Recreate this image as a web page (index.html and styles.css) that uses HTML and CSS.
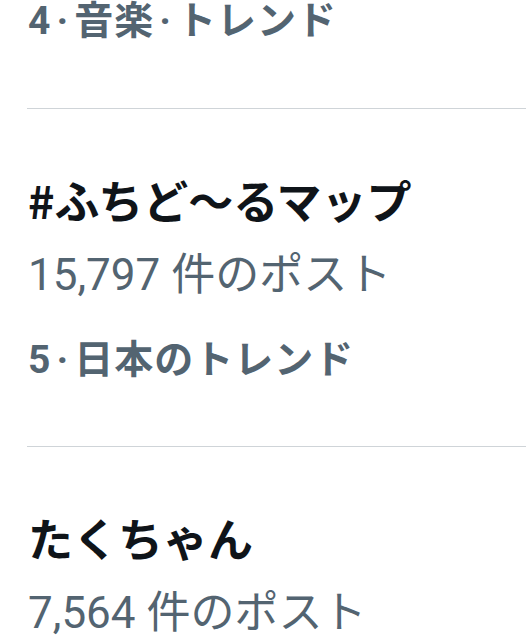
FILE: index.html
```html
<!DOCTYPE html>
<html lang="ja">
<head>
<meta charset="utf-8">
<link rel="stylesheet" href="styles.css">
</head>
<body>
<div class="trends">
  <div class="trend trend-partial">
    <div class="meta">4<span class="sep">·</span>音楽<span class="sep">·</span>トレンド</div>
  </div>
  <div class="trend">
    <div class="title">#ふちど〜るマップ</div>
    <div class="count">15,797 件のポスト</div>
    <div class="meta">5<span class="sep">·</span>日本のトレンド</div>
  </div>
  <div class="trend trend-last">
    <div class="title">たくちゃん</div>
    <div class="count">7,564 件のポスト</div>
  </div>
</div>
</body>
</html>
```

FILE: styles.css
```css
html, body {
  margin: 0;
  padding: 0;
  background: #ffffff;
}

body {
  font-family: "Noto Sans CJK JP", "Noto Sans", sans-serif;
  overflow: hidden;
}

.trends {
  display: flex;
  flex-direction: column;
  margin-left: 27px;
}

.trend {
  display: flex;
  flex-direction: column;
  padding: 63px 0 66px 1px;
  border-bottom: 1px solid #cfd4d8;
}

.trend-partial {
  padding-top: 0;
  padding-bottom: 67px;
}

.trend-last {
  border-bottom: none;
  padding-bottom: 0;
}

.title {
  font-size: 45px;
  line-height: 56px;
  font-weight: 700;
  color: #0f1419;
  white-space: nowrap;
}

.count {
  margin-top: 19px;
  font-family: Roboto, "Noto Sans CJK JP", sans-serif;
  font-size: 44px;
  line-height: 56px;
  font-weight: 400;
  color: #536471;
  white-space: nowrap;
}

.meta {
  margin-top: 37px;
  font-family: Roboto, "Noto Sans CJK JP", sans-serif;
  font-size: 39px;
  line-height: 40px;
  font-weight: 700;
  letter-spacing: 1px;
  color: #536471;
  white-space: nowrap;
}

.sep {
  margin: 0 5px;
}

.trend-partial .meta {
  margin-top: 0;
  padding-top: 1px;
}
```
